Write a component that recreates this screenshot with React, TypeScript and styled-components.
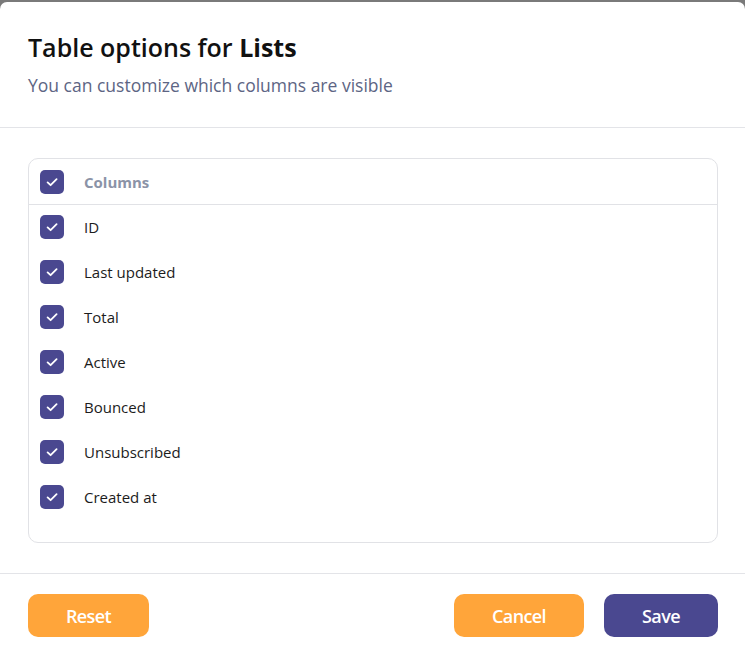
import * as React from "react"
import styled, { createGlobalStyle } from "styled-components"

const GlobalStyle = createGlobalStyle`
  html, body {
    margin: 0;
    padding: 0;
    background: #7a7a7a;
    font-family: "Open Sans", "Noto Sans", sans-serif;
  }
  * {
    box-sizing: border-box;
  }
`

const Modal = styled.div`
  margin-top: 2px;
  width: 745px;
  height: 659px;
  background: #ffffff;
  border-radius: 7px 7px 0 0;
  display: flex;
  flex-direction: column;
`

const Header = styled.header`
  padding: 28px 28px 0;
  height: 126px;
  border-bottom: 1px solid #e3e4e8;
`

const Title = styled.h2`
  margin: 0;
  font-size: 25px;
  line-height: 34px;
  font-weight: 600;
  color: #111111;

  strong {
    font-weight: 700;
  }
`

const Subtitle = styled.p`
  margin: 9px 0 0;
  font-size: 17.5px;
  line-height: 24px;
  color: #5d6584;
`

const Body = styled.div`
  padding: 30px 27px 30px 28px;
`

const Card = styled.div`
  border: 1px solid #e1e2e6;
  border-radius: 10px;
  height: 385px;
`

const HeaderRow = styled.div`
  display: flex;
  align-items: center;
  gap: 20px;
  height: 46px;
  padding: 0 0 0 11px;
  border-bottom: 1px solid #e1e2e6;
`

const Row = styled.label`
  display: flex;
  align-items: center;
  gap: 20px;
  height: 45px;
  padding: 0 0 1px 11px;
  font-size: 15px;
  color: #1c1c1c;
`

const ColumnsLabel = styled.span`
  font-size: 15px;
  font-weight: 700;
  color: #8b93a7;
`

const Box = styled.span`
  width: 24px;
  height: 24px;
  border-radius: 5px;
  background: #4a4890;
  display: inline-flex;
  align-items: center;
  justify-content: center;
  flex-shrink: 0;
`

const Footer = styled.footer`
  border-top: 1px solid #e3e4e8;
  display: flex;
  align-items: center;
  padding: 20px 27px 0 28px;
  gap: 20px;
`

const Spacer = styled.div`
  flex: 1;
`

const Button = styled.button<{ $tone: "orange" | "purple"; $w: number }>`
  width: ${(p) => p.$w}px;
  height: 43px;
  border: none;
  border-radius: 10px;
  background: ${(p) => (p.$tone === "orange" ? "#ffa53a" : "#4a4890")};
  color: #ffffff;
  font-family: "Open Sans", "Noto Sans", sans-serif;
  font-size: 18px;
  font-weight: 600;
  letter-spacing: -0.6px;
  cursor: pointer;
`

const Check: React.FC = () => (
  <Box>
    <svg width="16" height="16" viewBox="0 0 16 16" fill="none">
      <path d="M3.6 8.4l3 2.8L12.6 5.2" stroke="#fff" strokeWidth="1.8" strokeLinecap="round" strokeLinejoin="round" />
    </svg>
  </Box>
)

const columns = ["ID", "Last updated", "Total", "Active", "Bounced", "Unsubscribed", "Created at"]

const App: React.FC = () => {
  return (
    <>
      <GlobalStyle />
      <Modal>
        <Header>
          <Title>
            Table options for <strong>Lists</strong>
          </Title>
          <Subtitle>You can customize which columns are visible</Subtitle>
        </Header>
        <Body>
          <Card>
            <HeaderRow>
              <Check />
              <ColumnsLabel>Columns</ColumnsLabel>
            </HeaderRow>
            {columns.map((c) => (
              <Row key={c}>
                <Check />
                {c}
              </Row>
            ))}
          </Card>
        </Body>
        <Footer>
          <Button $tone="orange" $w={121}>Reset</Button>
          <Spacer />
          <Button $tone="orange" $w={130}>Cancel</Button>
          <Button $tone="purple" $w={114}>Save</Button>
        </Footer>
      </Modal>
    </>
  )
}

export default App
